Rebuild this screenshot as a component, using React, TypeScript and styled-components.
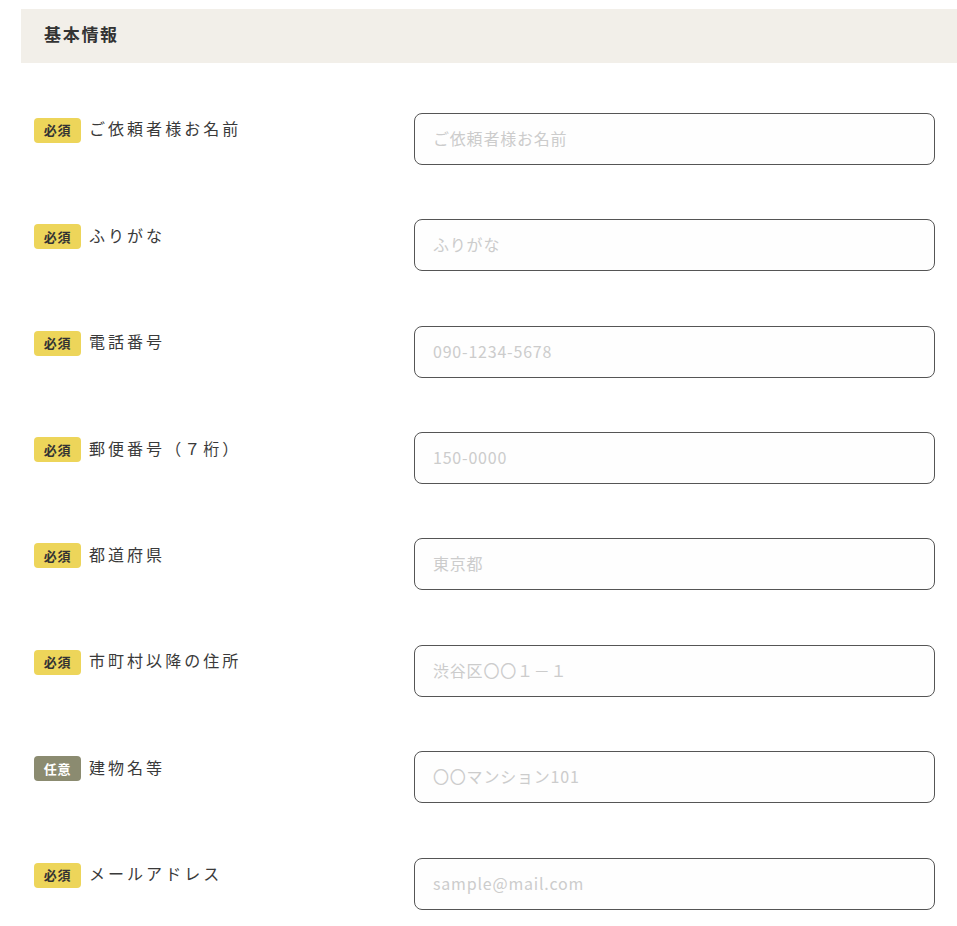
import React from "react";
import styled, { createGlobalStyle } from "styled-components";

const GlobalStyle = createGlobalStyle`
  html, body {
    margin: 0;
    padding: 0;
    background: #ffffff;
  }
  body {
    font-family: "Noto Sans CJK JP", "Noto Sans", sans-serif;
    color: #333333;
  }
  * { box-sizing: border-box; }
`;

const Page = styled.div`
  padding: 9px 0 0 21px;
  width: 957px;
`;

const Section = styled.section`
  width: 936px;
`;

const SectionHeader = styled.h2`
  margin: 0;
  height: 54px;
  display: flex;
  align-items: center;
  padding: 0 0 5px 23px;
  background: #f2efe9;
  font-size: 17px;
  font-weight: 700;
  letter-spacing: 0.1em;
  color: #333333;
`;

const FieldList = styled.div`
  padding-top: 22.8px;
  display: flex;
  flex-direction: column;
`;

const Row = styled.div`
  display: grid;
  grid-template-columns: 380px 521px;
  padding: 27.2px 0 27.2px 13px;
  align-items: start;
`;

const LabelCell = styled.label`
  display: flex;
  align-items: center;
  gap: 8px;
  margin-top: 5px;
  height: 25px;
`;

const Badge = styled.span<{ $required: boolean }>`
  display: inline-flex;
  align-items: center;
  justify-content: center;
  width: 47px;
  height: 25px;
  padding-bottom: 1px;
  border-radius: 4px;
  font-size: 13px;
  font-weight: 700;
  letter-spacing: 0.05em;
  background: ${(p) => (p.$required ? "#edd55a" : "#8b8b70")};
  color: ${(p) => (p.$required ? "#333333" : "#ffffff")};
  flex-shrink: 0;
`;

const LabelText = styled.span`
  font-size: 16px;
  line-height: 20px;
  padding-bottom: 4px;
  letter-spacing: 0.19em;
  color: #3a3a3a;
  white-space: nowrap;
`;

const Input = styled.input`
  width: 521px;
  height: 52px;
  border: 1px solid #555555;
  border-radius: 8px;
  padding: 0 18px 2px;
  background: #fefefe;
  font-family: "Noto Sans CJK JP", "Noto Sans", sans-serif;
  font-size: 16px;
  letter-spacing: 0.05em;
  color: #333333;
  outline: none;
  &::placeholder {
    color: #cccccc;
  }
`;

type Field = { label: string; placeholder: string; required: boolean; type?: string };

const fields: Field[] = [
  { label: "ご依頼者様お名前", placeholder: "ご依頼者様お名前", required: true },
  { label: "ふりがな", placeholder: "ふりがな", required: true },
  { label: "電話番号", placeholder: "090-1234-5678", required: true, type: "tel" },
  { label: "郵便番号（７桁）", placeholder: "150-0000", required: true },
  { label: "都道府県", placeholder: "東京都", required: true },
  { label: "市町村以降の住所", placeholder: "渋谷区〇〇１－１", required: true },
  { label: "建物名等", placeholder: "〇〇マンション101", required: false },
  { label: "メールアドレス", placeholder: "sample@mail.com", required: true, type: "email" },
];

export default function App() {
  return (
    <>
      <GlobalStyle />
      <Page>
        <Section>
          <SectionHeader>基本情報</SectionHeader>
          <FieldList>
            {fields.map((f, i) => (
              <Row key={i}>
                <LabelCell htmlFor={`f${i}`}>
                  <Badge $required={f.required}>{f.required ? "必須" : "任意"}</Badge>
                  <LabelText>{f.label}</LabelText>
                </LabelCell>
                <Input id={`f${i}`} type={f.type ?? "text"} placeholder={f.placeholder} />
              </Row>
            ))}
          </FieldList>
        </Section>
      </Page>
    </>
  );
}
